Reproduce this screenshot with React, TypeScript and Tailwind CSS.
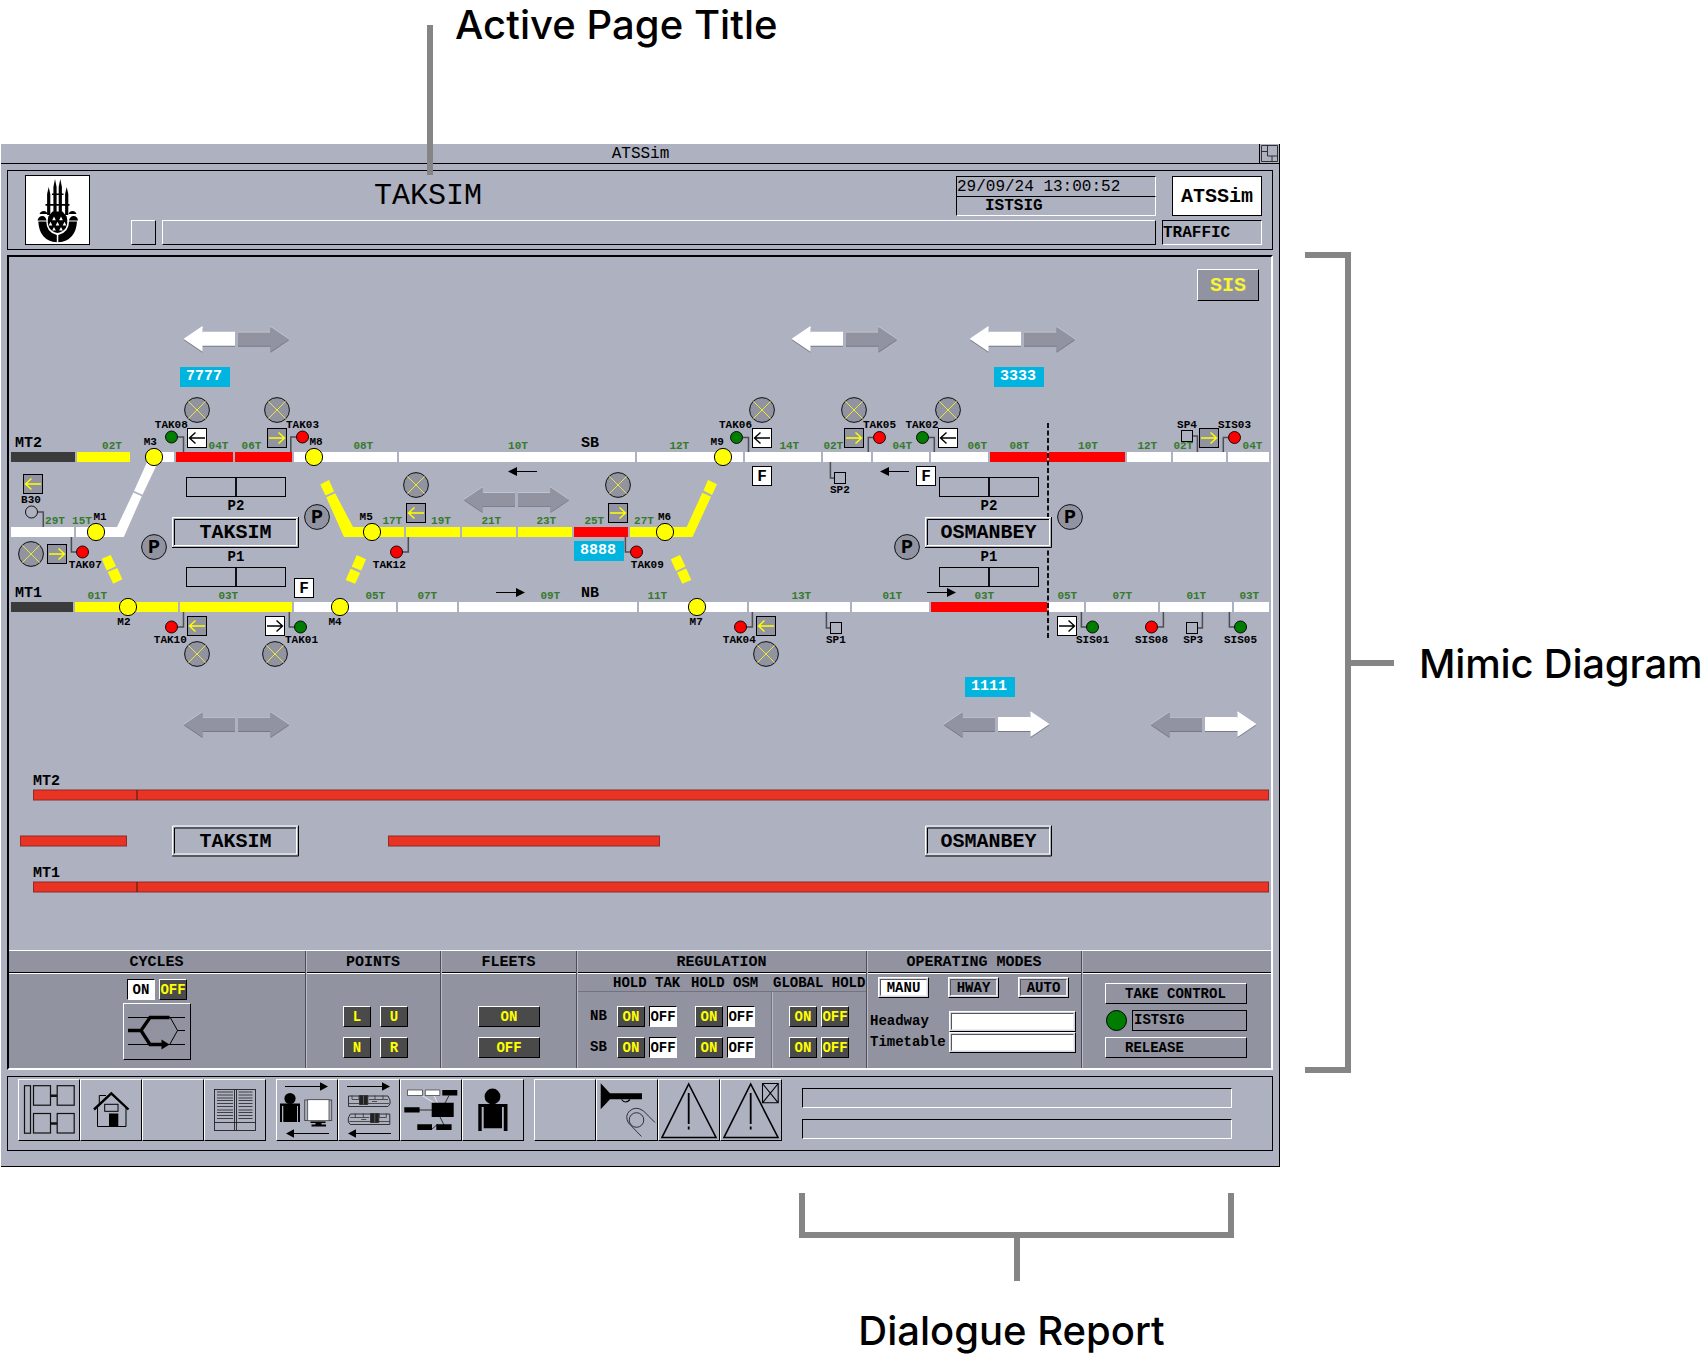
import React from "react";

type Pt = [number, number, string];

const MONO = "[font-family:'Liberation_Mono',monospace]";

/* ---------- mimic diagram data ---------- */

// x1, x2, y, fill
const tracks: [number, number, number, string][] = [
  [11, 75, 452, "#3b3b3b"], [77, 130, 452, "#ff0"], [157, 174, 452, "#fff"], [176, 233, 452, "#f00"],
  [235, 292, 452, "#f00"], [294, 397, 452, "#fff"], [399, 635, 452, "#fff"], [637, 743, 452, "#fff"],
  [745, 821, 452, "#fff"], [823, 871, 452, "#fff"], [873, 929, 452, "#fff"], [931, 988, 452, "#fff"],
  [990, 1047, 452, "#f00"], [1049, 1125, 452, "#f00"], [1127, 1171, 452, "#fff"], [1173, 1226, 452, "#fff"],
  [1228, 1269, 452, "#fff"],
  [11, 73, 602, "#3b3b3b"], [75, 178, 602, "#ff0"], [180, 292, 602, "#ff0"], [294, 396, 602, "#fff"],
  [398, 457, 602, "#fff"], [459, 637, 602, "#fff"], [639, 747, 602, "#fff"], [749, 850, 602, "#fff"],
  [852, 929, 602, "#fff"], [931, 1047, 602, "#f00"], [1049, 1084, 602, "#fff"], [1086, 1158, 602, "#fff"],
  [1160, 1232, 602, "#fff"], [1234, 1269, 602, "#fff"],
  [11, 74, 527, "#fff"], [406, 460, 527, "#ff0"], [462, 516, 527, "#ff0"], [518, 572, 527, "#ff0"],
  [574, 628, 527, "#f00"],
];

const yellowShapes = [
  "320.3,484.5 329,480 334,491.5 325.5,495.5",
  "326.3,497.3 335.2,493.3 353,527 404,527 404,537 344,537",
  "630,527 686.7,527 702.3,492.8 711,496.8 692.5,537 630,537",
  "703.5,490.5 708,480 717,484.3 712,495",
  "101.7,558.7 110.7,555 116,566.3 106.7,570.5",
  "107.7,572 117.3,568 122.3,579.3 113.3,583.7",
  "356.7,555 366,559.3 361.3,570.5 351.7,566.8",
  "350.6,568.8 360.2,572.9 355,583.7 345.7,580",
  "670.7,559.3 680,555 685.5,566.5 676,571",
  "677,572.4 686.2,568.4 691.3,580 682.3,583.7",
];

const trackLabels: Pt[] = [
  [112, 449, "02T"], [218.5, 449, "04T"], [251.5, 449, "06T"], [363.3, 449, "08T"], [518, 449, "10T"],
  [679.3, 449, "12T"], [789.3, 449, "14T"], [833.3, 449, "02T"], [902.3, 449, "04T"], [977.3, 449, "06T"],
  [1019.3, 449, "08T"], [1088, 449, "10T"], [1147.3, 449, "12T"], [1183.3, 449, "02T"], [1252.5, 449, "04T"],
  [55, 524, "29T"], [82, 524, "15T"], [392.3, 524, "17T"], [441, 524, "19T"], [491.3, 524, "21T"],
  [546.3, 524, "23T"], [594.3, 524, "25T"], [644, 524, "27T"],
  [97.3, 599, "01T"], [228.3, 599, "03T"], [375.3, 599, "05T"], [427.3, 599, "07T"], [550.3, 599, "09T"],
  [657.3, 599, "11T"], [801.3, 599, "13T"], [892.3, 599, "01T"], [984.3, 599, "03T"], [1067.3, 599, "05T"],
  [1122.3, 599, "07T"], [1196.3, 599, "01T"], [1249.3, 599, "03T"],
];

const smallLabels: Pt[] = [
  [171.3, 428, "TAK08"], [302.5, 428, "TAK03"], [735.5, 428, "TAK06"], [879.5, 428, "TAK05"], [922, 428, "TAK02"],
  [1187, 428, "SP4"], [1234.5, 428, "SIS03"], [31, 503, "B30"], [85.3, 568, "TAK07"], [170.3, 643, "TAK10"],
  [301.5, 643, "TAK01"], [389.3, 568, "TAK12"], [647.3, 568, "TAK09"], [739.3, 643, "TAK04"], [835.9, 643, "SP1"],
  [839.9, 493, "SP2"], [1092.5, 643, "SIS01"], [1151.5, 643, "SIS08"], [1193.2, 643, "SP3"], [1240.5, 643, "SIS05"],
  [150.3, 445, "M3"], [316, 445, "M8"], [100, 520, "M1"], [123.9, 625, "M2"], [366.2, 520, "M5"],
  [335, 625, "M4"], [664.5, 520, "M6"], [696.2, 625, "M7"], [717.2, 445, "M9"],
];

const switches: [number, number][] = [
  [154, 457], [314, 457], [96, 532], [128, 607], [372, 532], [340, 607], [665, 532], [697, 607], [723, 457],
];

const crossCircles: [number, number][] = [
  [197, 410], [277, 410], [762, 410], [854, 410], [948, 410], [31, 554], [197, 654], [275, 654],
  [416, 485], [618, 485], [766, 654],
];

const GREEN = "#007d00";
// cx, cy, post x, post end y, fill
const signals: [number, number, number, number, string][] = [
  [171.5, 437, 183.5, 452, GREEN], [302.5, 437, 290.8, 452, "#f00"], [736.5, 437.5, 748.5, 452, GREEN],
  [879.5, 437.5, 868.3, 452, "#f00"], [922.5, 437.5, 934.3, 452, GREEN], [1234.5, 437.5, 1223.3, 452, "#f00"],
  [31.5, 512, 43.3, 527, "none"], [82.5, 552, 71.4, 537, "#f00"], [171.5, 627, 183.5, 612, "#f00"],
  [300.5, 627, 289.3, 612, GREEN], [396.5, 552, 408.3, 537, "#f00"], [636.5, 552, 625.4, 537, "#f00"],
  [740.5, 627, 752.4, 612, "#f00"], [1092.5, 627, 1081.4, 612, GREEN], [1151.5, 627, 1163.4, 612, "#f00"],
  [1240.5, 627, 1229.4, 612, GREEN],
];

// square x, y, post x, post end y
const stopPoints: [number, number, number, number][] = [
  [830, 622, 826.4, 612], [834, 472, 830.4, 462], [1186, 622, 1202.4, 612], [1181, 430, 1197.4, 452],
];

// x, y, direction, lit
const arrowBoxes: [number, number, "l" | "r", boolean][] = [
  [187, 428, "l", true], [267, 428, "r", false], [23, 474, "l", false], [47, 544, "r", false],
  [187, 616, "l", false], [265, 616, "r", true], [406, 503, "l", false], [608, 503, "r", false],
  [752, 428, "l", true], [844, 428, "r", false], [938, 428, "l", true], [1199, 428, "r", false],
  [756, 616, "l", false], [1057, 616, "r", true],
];

/* ---------- mimic diagram parts ---------- */

function BigArrow({ points, lit }: { points: string; lit: boolean }) {
  return (
    <g>
      <polygon points={points} fill={lit ? "#fff" : "#c9cad6"} transform="translate(0,-0.8)" />
      <polygon points={points} fill="#777986" transform="translate(0,0.9)" />
      <polygon points={points} fill={lit ? "#fff" : "#9193a0"} />
    </g>
  );
}

function DirectionPair({ x, y, left = false, right = false }: { x: number; y: number; left?: boolean; right?: boolean }) {
  return (
    <g transform={`translate(${x},${y})`}>
      <BigArrow points="-52.5,0 -34,-12.5 -34,-6.7 -1.5,-6.7 -1.5,6.5 -34,6.5 -34,12.5" lit={left} />
      <BigArrow points="52.5,0 34,-12.5 34,-6.7 1.5,-6.7 1.5,6.5 34,6.5 34,12.5" lit={right} />
    </g>
  );
}

function TrainTag({ x, y, id }: { x: number; y: number; id: string }) {
  return (
    <g>
      <rect x={x} y={y} width="50" height="20" fill="#00b4e0" />
      <text x={x + 24} y={y + 13} textAnchor="middle" className="text-[15px] font-bold" fill="#fff">{id}</text>
    </g>
  );
}

function StationBox({ x, y, name }: { x: number; y: number; name: string }) {
  return (
    <g>
      <rect x={x} y={y} width="127" height="31" fill="#aeb1c0" />
      <path d={`M${x + 0.5} ${y + 31}V${y + 0.5}H${x + 127}`} stroke="#fff" fill="none" />
      <path d={`M${x} ${y + 30.5}H${x + 126.5}V${y}`} stroke="#000" fill="none" />
      <path d={`M${x + 2.5} ${y + 28.5}V${y + 2.5}H${x + 124}`} stroke="#000" fill="none" />
      <path d={`M${x + 2} ${y + 28.5}H${x + 124.5}V${y + 2}`} stroke="#fff" fill="none" />
      <text x={x + 63.5} y={y + 21} textAnchor="middle" className="text-[20px] font-bold">{name}</text>
    </g>
  );
}

function Platform({ x, y }: { x: number; y: number }) {
  return (
    <g fill="none" stroke="#000">
      <rect x={x + 0.5} y={y + 0.5} width="99" height="19" />
      <path d={`M${x + 50} ${y}v20`} strokeWidth="1.8" />
    </g>
  );
}

function ThinArrow({ x, y, dir }: { x: number; y: number; dir: "l" | "r" }) {
  return dir === "l" ? (
    <g><path d={`M${x + 6} ${y}H${x + 29}`} stroke="#000" /><path d={`M${x} ${y}l9 -4.5v9z`} /></g>
  ) : (
    <g><path d={`M${x} ${y}H${x + 22}`} stroke="#000" /><path d={`M${x + 29} ${y}l-9 -4.5v9z`} /></g>
  );
}

function MimicDiagram() {
  return (
    <svg className={`block shrink-0 ${MONO}`} width="1262" height="693" viewBox="9 257 1262 693">
      <DirectionPair x={236.5} y={339.3} left />
      <DirectionPair x={844.5} y={339.3} left />
      <DirectionPair x={1022.5} y={339.3} left />
      <DirectionPair x={516.5} y={499.7} />
      <DirectionPair x={236.5} y={724.5} />
      <DirectionPair x={996.5} y={724.5} right />
      <DirectionPair x={1203.5} y={724.5} right />

      {/* lines */}
      {tracks.map(([a, b, y, c]) => <rect key={`${a}-${y}`} x={a} y={y} width={b - a} height="10" fill={c} />)}
      <polygon points="76,527 117,527 133.3,492.5 141.8,496.3 123.8,537 76,537" fill="#fff" />
      <polygon points="134,491 148,460 159,460 142.5,494.7" fill="#fff" />
      {yellowShapes.map((p) => <polygon key={p} points={p} fill="#ff0" />)}

      {/* signal posts */}
      <g fill="none" stroke="#4c4d55" strokeWidth="1.5">
        {signals.map(([cx, cy, px, py]) => <path key={`${cx}-${cy}`} d={`M${cx} ${cy}H${px}V${py}`} />)}
        {stopPoints.map(([x, y, px, py]) => <path key={`${x}`} d={`M${x + 6} ${y + 6}H${px}V${py}`} />)}
      </g>
      {signals.map(([cx, cy, , , f]) => (
        <circle key={`${cx}-${cy}`} cx={cx} cy={cy} r="6" fill={f === "none" ? "#aeb1c0" : f} stroke="#000" strokeWidth="0.9" />
      ))}
      {stopPoints.map(([x, y]) => <rect key={`${x}`} x={x + 0.5} y={y + 0.5} width="11" height="11" fill="#aeb1c0" stroke="#000" />)}

      {/* point machines */}
      {switches.map(([x, y]) => <circle key={`${x}-${y}`} cx={x} cy={y} r="8.6" fill="#ff0" stroke="#000" />)}

      {/* labels */}
      <g className="text-[11px] font-bold" fill="#37792d" textAnchor="middle">
        {trackLabels.map(([x, y, t]) => <text key={`${x}-${y}`} x={x} y={y}>{t}</text>)}
      </g>
      <g className="text-[11px] font-bold" textAnchor="middle">
        {smallLabels.map(([x, y, t]) => <text key={t} x={x} y={y - 0.5}>{t}</text>)}
      </g>

      {crossCircles.map(([x, y]) => (
        <g key={`${x}-${y}`}>
          <circle cx={x} cy={y} r="12.4" fill="#9193a0" stroke="#000" strokeWidth="0.9" />
          <path d={`M${x - 8.5} ${y - 8.5}l17 17m0 -17l-17 17`} stroke="#f5f02a" strokeWidth="0.9" />
        </g>
      ))}

      {arrowBoxes.map(([x, y, d, lit]) => (
        <g key={`${x}-${y}`} transform={`translate(${x},${y})`}>
          <rect x="0.5" y="0.5" width="19" height="19" fill={lit ? "#fff" : "#9193a0"} stroke="#000" />
          <path
            d={d === "l" ? "M18 10H3M8.5 4.5L2.5 10l6 5.5" : "M2 10H17M11.5 4.5l6 5.5l-6 5.5"}
            fill="none" stroke={lit ? "#000" : "#ff0"} strokeWidth="1.4"
          />
        </g>
      ))}

      {/* F and P markers */}
      {([[752, 466], [916, 466], [294, 578]] as [number, number][]).map(([x, y]) => (
        <g key={x}>
          <rect x={x + 0.5} y={y + 0.5} width="19" height="19" fill="#fff" stroke="#000" />
          <text x={x + 10} y={y + 15} textAnchor="middle" className="text-[16px] font-bold">F</text>
        </g>
      ))}
      {([[154, 547], [317, 517], [907, 547], [1070, 517]] as [number, number][]).map(([x, y]) => (
        <g key={x}>
          <circle cx={x} cy={y} r="12.4" fill="#9193a0" stroke="#000" strokeWidth="0.9" />
          <text x={x} y={y + 6} textAnchor="middle" className="text-[20px] font-bold">P</text>
        </g>
      ))}

      {/* line names */}
      <g className="text-[15px] font-bold">
        <text x="15" y="447">MT2</text>
        <text x="15" y="597">MT1</text>
        <text x="581" y="447">SB</text>
        <text x="581" y="597">NB</text>
        <text x="33" y="785">MT2</text>
        <text x="33" y="877">MT1</text>
      </g>
      <ThinArrow x={508} y={471.5} dir="l" />
      <ThinArrow x={880} y={471.5} dir="l" />
      <ThinArrow x={496} y={592.5} dir="r" />
      <ThinArrow x={927} y={592.5} dir="r" />

      {/* platforms and stations */}
      <path d="M1048 423V640" stroke="#000" strokeWidth="1.8" strokeDasharray="5 2.5" />
      {[186, 939].map((x) => (
        <g key={x} className="text-[14px] font-bold" textAnchor="middle">
          <Platform x={x} y={477} />
          <Platform x={x} y={567} />
          <text x={x + 50} y={510}>P2</text>
          <text x={x + 50} y={561}>P1</text>
        </g>
      ))}
      <StationBox x={172} y={517} name="TAKSIM" />
      <StationBox x={925} y={517} name="OSMANBEY" />

      <TrainTag x={180} y={367} id="7777" />
      <TrainTag x={994} y={367} id="3333" />
      <TrainTag x={574} y={541} id="8888" />
      <TrainTag x={965} y={677} id="1111" />

      {/* overview lines */}
      <g fill="#e93323" stroke="#8e2c2c">
        <rect x="33.5" y="790" width="1235" height="10" />
        <rect x="20.5" y="836" width="106" height="10" />
        <rect x="388.5" y="836" width="271" height="10" />
        <rect x="33.5" y="882" width="1235" height="10" />
      </g>
      <path d="M137 790v10M137 882v10" stroke="#4a1414" />
      <StationBox x={172} y={825.5} name="TAKSIM" />
      <StationBox x={925} y={825.5} name="OSMANBEY" />
    </svg>
  );
}

/* ---------- window chrome ---------- */

function Emblem() {
  return (
    <svg width="63" height="68" viewBox="1 1 63 68" className="block">
      <path d="M23.700 12l1.600 7V40h-3.200V19zM30 4l1.600 8V40h-3.200V12zM35.300 4l1.600 8V40h-3.200V12zM41.700 12l1.600 7V40h-3.200V19z" />
      <path d="M27 18.500h11.500v1.400H27zM20.500 29h24v1.800h-24z" />
      <path d="M28 38h9v3h-9zM27.500 36.500h10l4.200 5q3 14-9.200 16.500q-12-2.500-9.200-16.500z" />
      <path d="M14.500 39q1-3 4.500-3q2.500 0 3.500 3zM43.500 39q1-3 4-3q3 0 4 3zM12.500 45.500q1-4.500 5-4.500q3 0 4 4.500zM44 45.500q1-4.500 4.500-4.500q4 0 4.500 4.500z" />
      <path d="M13.300 46.500h8q0 11 10.500 13.500v7.300q-17.500-1.500-18.500-20.800zM52 46.500h-8q0 11-10.700 13.500v7.300q17.500-1.500 18.700-20.800z" />
      <g fill="#fff">
        <path d="M29 41.500l1.800 3.800h-3.600zM36 41.500l1.800 3.800h-3.600zM25.500 46.800l1.800 3.800h-3.600zM32.500 46.800l1.800 3.800h-3.600zM39.500 46.800l1.800 3.800h-3.600zM29 52l1.800 3.500h-3.600zM36 52l1.800 3.500h-3.600z" />
      </g>
    </svg>
  );
}

function Header() {
  return (
    <header className="mx-1.5 mt-1.5 flex h-20 border border-black">
      <div className="mt-1 ml-[17px] h-[70px] w-[65px] border border-black bg-white">
        <Emblem />
      </div>
      <div className="mt-[5px] ml-[41px] flex w-[1025px] flex-col gap-1">
        <div className="flex h-10 justify-between">
          <h1 className="pl-[243px] text-[30px] leading-[41px] font-normal">TAKSIM</h1>
          <div className="w-[200px]">
            <div className="h-5 border-t border-r border-l border-t-black border-r-white border-l-black text-[16px] leading-[20px] whitespace-pre">29/09/24 13:00:52</div>
            <div className="h-5 border border-t-black border-r-white border-b-white border-l-black pl-[28px] text-[16px] leading-[19px] font-bold">ISTSIG</div>
          </div>
        </div>
        <div className="flex h-[25px] gap-1.5">
          <div className="w-[25px] border border-t-white border-r-black border-b-black border-l-white" />
          <div className="flex-1 border border-t-white border-r-black border-b-black border-l-white" />
        </div>
      </div>
      <div className="mt-[5px] ml-1.5 flex w-[100px] flex-col items-end gap-1">
        <div className="h-10 w-[90px] border border-black bg-white text-center text-[20px] leading-[40px] font-bold">ATSSim</div>
        <div className="h-[25px] w-full border border-t-black border-r-white border-b-white border-l-black text-[16px] leading-[25px] font-bold">TRAFFIC</div>
      </div>
    </header>
  );
}

function Key({ label, lit = false, wide = false }: { label: string; lit?: boolean; wide?: boolean }) {
  const tone = lit
    ? "bg-white text-black border-t-black border-l-black border-r-white border-b-white"
    : "bg-[#4a4a4a] text-[#ff0] border-t-white border-l-white border-r-black border-b-black";
  return (
    <button className={`flex h-[21px] shrink-0 justify-center border p-0 text-[14px] leading-[21px] font-bold ${wide ? "w-[62px]" : "w-7"} ${tone}`}>
      <span className="whitespace-nowrap">{label}</span>
    </button>
  );
}

function Mode({ label, lit = false }: { label: string; lit?: boolean }) {
  return (
    <button className="h-[21px] w-[51px] border border-t-white border-r-black border-b-black border-l-white bg-[#d4d5dc] p-px text-[14px] font-bold">
      <span className={`flex h-[17px] justify-center border border-t-[#55565e] border-r-[#ececf0] border-b-[#ececf0] border-l-[#55565e] leading-[17px] ${lit ? "bg-white" : "bg-[#9193a0]"}`}>{label}</span>
    </button>
  );
}

function Field({ label }: { label: string }) {
  return (
    <label className="flex h-[21px] items-center justify-between">
      <span>{label}</span>
      <span className="block h-[21px] w-[127px] border border-t-white border-r-black border-b-black border-l-white bg-[#d4d5dc] p-px">
        <span className="block h-full border border-t-[#55565e] border-r-[#ececf0] border-b-[#ececf0] border-l-[#55565e] bg-white" />
      </span>
    </label>
  );
}

function Section({ title, width, first = false, last = false, children }: { title: string; width: string; first?: boolean; last?: boolean; children: React.ReactNode }) {
  return (
    <section className={`flex shrink-0 flex-col ${width} ${last ? "" : "border-r border-r-[#4c4d55]"} ${first ? "" : "border-l border-l-[#b9bac6]"}`}>
      <h2 className="h-[22px] border-b border-black pr-px text-center text-[15px] leading-[23px] font-bold">{title}</h2>
      <div className="flex-1 border-t border-white text-[14px] font-bold">{children}</div>
    </section>
  );
}

function RegRow({ label }: { label: string }) {
  return (
    <div className="flex h-[21px] w-[261px] shrink-0 items-center">
      <span className="w-[27px] shrink-0">{label}</span>
      <div className="flex shrink-0 gap-1"><Key label="ON" /><Key label="OFF" lit /></div>
      <div className="ml-[18px] flex shrink-0 gap-1"><Key label="ON" /><Key label="OFF" lit /></div>
      <div className="ml-[34px] flex shrink-0 gap-1"><Key label="ON" /><Key label="OFF" /></div>
    </div>
  );
}

function ControlPanel() {
  return (
    <div className="flex h-[118px] border-t border-white bg-[#9193a0]">
      <Section title="CYCLES" width="w-[297px]" first>
        <div className="flex flex-col items-center gap-[3px] pt-[5px]">
          <div className="flex gap-1"><Key label="ON" lit /><Key label="OFF" /></div>
          <div className="h-[57px] w-[68px] border border-t-white border-r-black border-b-black border-l-white">
            <svg width="66" height="55" viewBox="1 1 66 55" fill="none" stroke="#000">
              <path d="M5 14.500h57M5 41.500h57M47 14l7.500 13.500L47 41M54.500 27.500H62" />
              <path d="M5 27.500H18L27 14.500H46.500M18 27.500L27 41.500H40" strokeWidth="3.300" />
              <path d="M38.500 36.500l8 5l-8 5z" fill="#000" stroke="none" />
            </svg>
          </div>
        </div>
      </Section>
      <Section title="POINTS" width="w-[135px]">
        <div className="grid grid-cols-[28px_28px] justify-center gap-x-[9px] gap-y-2.5 pt-8 pl-[4px]">
          <Key label="L" /><Key label="U" /><Key label="N" /><Key label="R" />
        </div>
      </Section>
      <Section title="FLEETS" width="w-[136px]">
        <div className="flex flex-col items-center gap-2.5 pt-8">
          <Key label="ON" wide /><Key label="OFF" wide />
        </div>
      </Section>
      <Section title="REGULATION" width="w-[290px]">
        <div className="flex h-[18px] border-b border-[#72737e] pl-[35px] leading-[19px] whitespace-pre">
          <span className="w-[78px] shrink-0">HOLD TAK</span>
          <span className="w-[82px] shrink-0">HOLD OSM</span>
          <span>GLOBAL HOLD</span>
        </div>
        <div className="grid h-[76px] grid-cols-[194px_1fr]">
          <div className="flex flex-col gap-2.5 border-r border-[#72737e] pt-3.5 pl-3">
            <RegRow label="NB" />
            <RegRow label="SB" />
          </div>
          <div className="border-l border-[#b9bac6]" />
        </div>
      </Section>
      <Section title="OPERATING MODES" width="w-[215px]">
        <div className="flex gap-[19px] pt-[3px] pl-2.5">
          <Mode label="MANU" lit /><Mode label="HWAY" /><Mode label="AUTO" />
        </div>
        <div className="mt-[13px] ml-0.5 w-[206px]">
          <Field label="Headway" />
          <Field label="Timetable" />
        </div>
      </Section>
      <Section title="" width="w-[189px]" last>
        <div className="flex flex-col gap-1.5 pt-[9px] pl-[22px]">
          <button className="h-[21px] w-[142px] border border-t-white border-r-black border-b-black border-l-white pl-[19px] text-left leading-[21px]">TAKE CONTROL</button>
          <div className="flex w-[142px] items-center justify-between">
            <span className="ml-px size-[21px] rounded-full border border-black bg-[#007d00]" />
            <span className="h-[21px] w-[115px] border border-black pl-px leading-[19px]">ISTSIG</span>
          </div>
          <button className="h-[21px] w-[142px] border border-t-white border-r-black border-b-black border-l-white pl-[19px] text-left leading-[20px]">RELEASE</button>
        </div>
      </Section>
    </div>
  );
}

/* ---------- toolbar icons, drawn on a 62 x 62 button ---------- */

const ArrowTop = () => <g><path d="M9 7.500H46" stroke="#000" /><path d="M52 7.500l-8-4.200v8.400z" /></g>;
const ArrowBottom = () => <g><path d="M16 54.500H53" stroke="#000" /><path d="M10 54.500l8-4.200v8.400z" /></g>;

const Carriage = ({ y, flip = false }: { y: number; flip?: boolean }) => (
  <g transform={flip ? `translate(62.300,${y}) scale(-1,1)` : `translate(0,${y})`} fill="none" stroke="#333">
    <path d="M10.500 0.500H50l2 4v4l-2 2.500H10.500z" />
    <path d="M10.500 8H51M14 0v4h7V0M37 0v4M45 0v4M31 4H50M34 6H39" strokeWidth="0.800" />
    <path d="M21.500 0h8.300v9h-8.300z" fill="#222" />
    <path d="M25.500 0v9" stroke="#777" strokeWidth="0.700" />
  </g>
);

const Warning = () => (
  <g fill="none" stroke="#000">
    <path d="M30.700 5L58 58.500H4z" strokeWidth="1.600" />
    <path d="M30.700 14V45M30.700 47.500V50.500" strokeWidth="1.800" />
  </g>
);

const icons: Record<string, React.ReactNode> = {
  layout: (
    <g fill="none" stroke="#111" strokeWidth="1.200">
      <rect x="6.500" y="6.700" width="6" height="47.500" />
      <rect x="15.500" y="6.700" width="17" height="19.500" /><rect x="39.200" y="6.700" width="17" height="19.500" />
      <rect x="15.500" y="34.500" width="17" height="19.500" /><rect x="39.200" y="34.500" width="17" height="19.500" />
      <path d="M32.500 16.700H39M32.500 44.500H39" strokeWidth="2.500" />
    </g>
  ),
  home: (
    <g fill="none" stroke="#000">
      <path d="M17.500 28V47.500H46V28M19.300 26V16.500H26" />
      <rect x="24.700" y="25.300" width="13.300" height="7" />
      <path d="M14 30.500L31.300 14.300L48.500 30.500" strokeWidth="2.400" />
      <rect x="29" y="34.500" width="9.300" height="13" fill="#000" stroke="none" />
    </g>
  ),
  blank: null,
  book: (
    <g fill="none" stroke="#222" strokeWidth="0.900">
      <rect x="10.500" y="10.500" width="41" height="41" />
      <path d="M30.500 10.500v41M32.500 10.500v41M10.500 43.500h41" />
      <path d="M13 13h16M13 16h16M13 19h16M13 21.500h16M13 24.500h16M13 27.500h16M13 31h16M13 33.500h16M13 36.500h16M13 39.500h16M34.500 13h14M34.500 16h14M34.500 19h14M34.500 21.500h14M34.500 24.500h14M34.500 27.500h14M34.500 31h14M34.500 33.500h14M34.500 36.500h14M34.500 39.500h14" strokeWidth="0.800" />
    </g>
  ),
  operator: (
    <g>
      <ArrowTop /><ArrowBottom />
      <circle cx="14" cy="19.500" r="5.600" />
      <path d="M4 24.500h20v18.500h-2v-16h-1v16H7.300v-16H6v16H4z" />
      <rect x="28.700" y="21" width="27" height="20.500" fill="none" stroke="#444" strokeWidth="0.900" />
      <rect x="31.700" y="20.700" width="21.300" height="21" fill="#fff" stroke="#444" strokeWidth="0.800" />
      <path d="M34.500 42.500h15v1.500h-4v1.500h4.500v2h-14.500v-2h4v-1.500h-5z" />
    </g>
  ),
  trains: <g><ArrowTop /><ArrowBottom /><Carriage y={16.500} /><Carriage y={34.500} flip /></g>,
  network: (
    <g>
      <path d="M22 16.500L36 25M34 16.500L38 25" stroke="#eee" strokeWidth="0.900" />
      <path d="M49 16.500L45 24M19 31H32M38 45L32 50M39 36L44 46" stroke="#222" strokeWidth="0.900" />
      <path d="M7.500 11h15v5.500h-15zM25.300 11h14.500v5.500H25.300z" fill="#fff" stroke="#333" strokeWidth="0.700" />
      <path d="M42.300 11h15v5.500h-15zM4.300 28.300h15.300v5.300H4.300zM31.700 23.700h22v14.300h-22zM17.300 45.300H32V51H17.300zM36.300 45.300h15.300V51H36.300z" />
    </g>
  ),
  person: (
    <g>
      <circle cx="30.500" cy="17.500" r="7.900" />
      <path d="M16.300 25h29.200v27h-3.700V28H40v21.300H21.700V28h-2v24h-3.400z" />
    </g>
  ),
  horn: (
    <g>
      <path d="M4.700 4.300L14 14.300H46v6H14L4.700 30.300z" />
      <path d="M25.500 20.500q4 5 8.500 0" fill="none" stroke="#000" strokeWidth="1.200" />
      <g fill="none" stroke="#222" strokeWidth="0.900">
        <circle cx="40.500" cy="41" r="7.300" />
        <path d="M45.500 57.500L32.500 44Q28.500 37 33.500 32Q40 26.500 47.500 32L59 43.500" />
      </g>
    </g>
  ),
  alarm: <Warning />,
  alarmOff: (
    <g>
      <Warning />
      <path d="M42.500 4.500h15.700v19.300H42.500zM42.500 4.500l15.700 19.300M58.200 4.500L42.500 23.800" fill="none" stroke="#000" strokeWidth="1.100" />
    </g>
  ),
};

function ToolGroup({ names }: { names: string[] }) {
  return (
    <div className="flex h-[62px]">
      {names.map((n) => (
        <button key={n} className="size-[62px] border border-t-white border-r-black border-b-black border-l-white p-0">
          <svg width="60" height="60" viewBox="1 1 60 60" className="block">{icons[n]}</svg>
        </button>
      ))}
    </div>
  );
}

function Toolbar() {
  return (
    <footer className="mx-1.5 mt-1.5 flex h-[75px] gap-2.5 border border-black pt-0.5 pl-2.5">
      <ToolGroup names={["layout", "home", "blank", "book"]} />
      <ToolGroup names={["operator", "trains", "network", "person"]} />
      <ToolGroup names={["blank", "horn", "alarm", "alarmOff"]} />
      <div className="mt-[9px] ml-2.5 flex w-[430px] flex-col gap-[11px]">
        <div className="h-5 border border-t-black border-r-white border-b-white border-l-black" />
        <div className="h-5 border border-t-black border-r-white border-b-white border-l-black" />
      </div>
    </footer>
  );
}

function SimWindow() {
  return (
    <div className={`ml-px flex w-[1279px] shrink-0 flex-col border-r border-b border-black bg-[#aeb1c0] text-black ${MONO}`}>
      <div className="flex h-5 border-b border-black">
        <div className="flex-1 pl-[21px] text-center text-[16px] leading-[20px]">ATSSim</div>
        <svg width="20" height="19" className="border-l border-black" viewBox="0 0 19 19" fill="none" stroke="#222">
          <path d="M1.500 1.500h16v16h-16zM7.500 1.500v10.500h10M1.500 7.500h6M12 12v5.500" strokeWidth="0.900" />
        </svg>
      </div>
      <Header />
      <main className="relative mx-1.5 mt-[5px] flex h-[815px] shrink-0 flex-col border-2 border-t-black border-r-white border-b-white border-l-black">
        <MimicDiagram />
        <ControlPanel />
        <button className="absolute top-3 right-3 h-8 w-[62px] border border-t-white border-r-black border-b-black border-l-white bg-[#9193a0] text-[20px] leading-[32px] font-bold text-[#f8f532]">SIS</button>
      </main>
      <Toolbar />
    </div>
  );
}

export default function App() {
  return (
    <div className="relative flex h-[1355px] w-[1704px] flex-col overflow-hidden bg-white text-black">
      <div className="h-36 shrink-0 pl-[455px] [font-family:Inter,sans-serif] text-[40px] leading-[50px] font-medium tracking-[0.05px]">Active Page Title</div>
      <div className="flex h-[1023px] shrink-0">
        <SimWindow />
        <div className="mt-[108px] ml-[25px] flex h-[821px] items-center">
          <div className="h-full w-[46px] border-y-[6px] border-r-[6px] border-[#858585]" />
          <div className="h-1.5 w-[43px] bg-[#858585]" />
          <div className="mt-0.5 ml-[25px] [font-family:Inter,sans-serif] text-[40px] leading-[50px] font-medium tracking-[-0.2px] whitespace-nowrap">Mimic Diagram</div>
        </div>
      </div>
      <div className="mt-[26px] ml-[799px] flex w-[435px] shrink-0 flex-col items-center">
        <div className="h-[45px] w-full border-x-[6px] border-b-[6px] border-[#858585]" />
        <div className="h-[43px] w-1.5 bg-[#858585]" />
        <div className="mt-[25px] ml-[-10px] [font-family:Inter,sans-serif] text-[40px] leading-[50px] font-medium">Dialogue Report</div>
      </div>
      <div className="absolute top-[25px] left-[427px] h-[150px] w-1.5 bg-[#858585]" />
    </div>
  );
}
